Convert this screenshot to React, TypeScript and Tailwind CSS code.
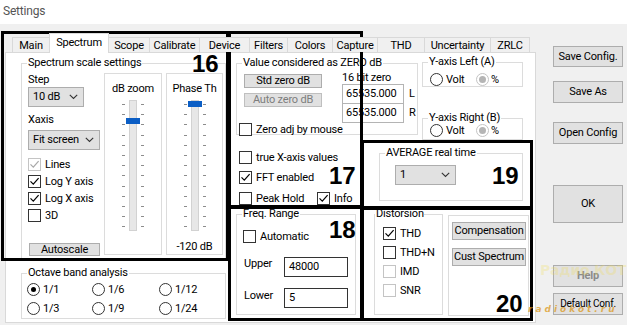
import React from "react";

const tabs: [string, string][] = [
  ["Main", "w-[38px]"],
  ["Spectrum", "w-[60px]"],
  ["Scope", "w-[42px]"],
  ["Calibrate", "w-[51px]"],
  ["Device", "w-[51px]"],
  ["Filters", "w-[39px]"],
  ["Colors", "w-[46px]"],
  ["Capture", "w-[46px]"],
  ["THD", "w-[48px]"],
  ["Uncertainty", "w-[67px]"],
  ["ZRLC", "w-[40px]"],
];

function Check({ on = false, off = false }: { on?: boolean; off?: boolean }) {
  return (
    <span
      className={`flex h-[13px] w-[13px] shrink-0 items-center justify-center border bg-white ${
        off ? "border-[#c4c4c4]" : "border-[#333333]"
      }`}
    >
      {on && (
        <svg width="11" height="11" viewBox="0 0 11 11">
          <path d="M1.5 5.3l2.8 2.9 5.3-6.1" fill="none" stroke={off ? "#a8a8a8" : "#000"} strokeWidth="1.2" />
        </svg>
      )}
    </span>
  );
}

function CheckRow({ label, on, off, className = "" }: { label: string; on?: boolean; off?: boolean; className?: string }) {
  return (
    <div className={`flex items-center gap-[4px] ${className}`}>
      <Check on={on} off={off} />
      <span>{label}</span>
    </div>
  );
}

function Radio({ on = false, off = false }: { on?: boolean; off?: boolean }) {
  return (
    <span
      className={`flex h-[13px] w-[13px] shrink-0 items-center justify-center rounded-full border bg-white ${
        off ? "border-[#c4c4c4]" : "border-[#333333]"
      }`}
    >
      {on && <span className={`rounded-full ${off ? "h-[7px] w-[7px] bg-[#b5b5b5]" : "h-[5px] w-[5px] bg-black"}`} />}
    </span>
  );
}

function Btn({ children, className = "" }: { children: React.ReactNode; className?: string }) {
  return (
    <div className={`flex items-center justify-center whitespace-nowrap border border-[#adadad] bg-[#e1e1e1] ${className}`}>
      {children}
    </div>
  );
}

function Combo({ text, className = "" }: { text: string; className?: string }) {
  return (
    <div className={`flex h-[20px] items-center justify-between border border-[#adadad] bg-[#e1e1e1] pl-[4px] pr-[5px] ${className}`}>
      <span>{text}</span>
      <svg width="9" height="6" viewBox="0 0 9 6">
        <path d="M0.8 0.8L4.5 4.5L8.2 0.8" fill="none" stroke="#333" strokeWidth="1.1" />
      </svg>
    </div>
  );
}

function Slider({ thumb }: { thumb: number }) {
  const ticks = Array.from({ length: 13 }, (_, i) => Math.round(4 + i * 10.2) + 0.5);
  return (
    <svg width="24" height="131" viewBox="0 0 24 131">
      <rect x="8.5" y="0.5" width="7" height="130" fill="#e7e7e7" stroke="#d2d2d2" />
      {ticks.map((y) => (
        <g key={y}>
          <line x1="1" x2="4" y1={y} y2={y} stroke="#8c8c8c" />
          <line x1="20" x2="23" y1={y} y2={y} stroke="#8c8c8c" />
        </g>
      ))}
      <rect x="5" y={thumb} width="14" height="6" fill="#0b5ec5" />
    </svg>
  );
}

function Mark({ n, box, num }: { n: string; box: string; num: string }) {
  return (
    <div className={`absolute border-[3px] border-black ${box}`}>
      <span className={`absolute font-['Liberation_Sans',sans-serif] text-[24px] font-bold leading-[24px] ${num}`}>{n}</span>
    </div>
  );
}

export default function App() {
  return (
    <div className="relative h-[325px] w-[627px] overflow-hidden bg-[#f0f0f0] font-['Roboto',sans-serif] text-[11px] leading-[12px] tracking-[-0.2px] text-black">
      <div className="h-[24px] bg-white pl-[3px] pt-[4px] text-[12px] leading-[14px] text-[#555555]">Settings</div>

      <div className="flex">
        {/* tab control */}
        <div className="ml-[5px] w-[531px] pt-[9px]">
          <div className="relative z-10 -mb-px flex h-[20px] items-end pl-[7px]">
            {tabs.map(([t, w], i) =>
              t === "Spectrum" ? (
                <div key={t} className={`relative z-10 -ml-px flex h-[20px] justify-center border border-b-0 border-[#d9d9d9] bg-white pt-[3px] ${w}`}>
                  {t}
                </div>
              ) : (
                <div
                  key={t}
                  className={`mb-px flex h-[15px] justify-center border border-b-0 border-[#d9d9d9] bg-[#f0f0f0] pt-[2px] ${w} ${i === 0 ? "" : "-ml-px"}`}
                >
                  {t}
                </div>
              )
            )}
          </div>

          <div className="flex h-[271px] border border-[#d9d9d9] bg-white">
            {/* left column */}
            <div className="ml-[15px] flex w-[205px] flex-col">
              <fieldset className="mt-[4px] h-[203px] border border-[#dcdcdc]">
                <legend className="ml-[5px] px-[1px] leading-[12px]">Spectrum scale settings</legend>
                <div className="flex">
                  <div className="ml-[6px] flex w-[72px] flex-col">
                    <div className="mt-[5px]">Step</div>
                    <Combo text="10 dB" className="mt-[1px] w-[56px]" />
                    <div className="mt-[7px]">Xaxis</div>
                    <Combo text="Fit screen" className="mt-[4px] w-[72px]" />
                    <div className="mt-[8px] flex flex-col gap-[4px]">
                      <CheckRow label="Lines" on off />
                      <CheckRow label="Log Y axis" on />
                      <CheckRow label="Log X axis" on />
                      <CheckRow label="3D" />
                    </div>
                    <Btn className="ml-[1px] mt-[21px] h-[13px] w-[71px]">Autoscale</Btn>
                  </div>
                  <div className="ml-[4px] mt-[4px] flex h-[182px] w-[58px] flex-col items-center border border-[#dcdcdc]">
                    <div className="mt-[9px]">dB zoom</div>
                    <div className="mt-[5px]">
                      <Slider thumb={18} />
                    </div>
                  </div>
                  <div className="ml-[4px] mt-[4px] flex h-[182px] w-[57px] flex-col items-center border border-[#dcdcdc]">
                    <div className="mt-[9px]">Phase Th</div>
                    <div className="mt-[5px]">
                      <Slider thumb={1} />
                    </div>
                    <div className="mt-[10px]">-120 dB</div>
                  </div>
                </div>
              </fieldset>

              <fieldset className="mt-[7px] h-[52px] border border-[#dcdcdc]">
                <legend className="ml-[5px] px-[1px] leading-[12px]">Octave band analysis</legend>
                <div className="mt-[4px] grid grid-cols-[65px_67px_60px] gap-y-[6px] pl-[5px]">
                  {[
                    ["1/1", true],
                    ["1/6", false],
                    ["1/12", false],
                    ["1/3", false],
                    ["1/9", false],
                    ["1/24", false],
                  ].map(([l, on]) => (
                    <div key={l as string} className="flex items-center gap-[3px]">
                      <Radio on={on as boolean} />
                      <span>{l}</span>
                    </div>
                  ))}
                </div>
              </fieldset>
            </div>

            {/* right area */}
            <div className="ml-[10px] flex w-[293px] flex-col">
              <div className="flex items-start">
                <fieldset className="mt-[4px] h-[78px] w-[182px] border border-[#dcdcdc]">
                  <legend className="ml-[5px] px-[1px] leading-[12px]">Value considered as ZERO dB</legend>
                  <div className="flex">
                    <div className="ml-[7px] flex flex-col">
                      <Btn className="mt-[5px] h-[14px] w-[78px]">Std zero dB</Btn>
                      <Btn className="mt-[5px] h-[14px] w-[78px] border-[#bfbfbf] bg-[#cccccc] text-[#7d7d7d]">Auto zero dB</Btn>
                    </div>
                    <div className="ml-[20px] flex flex-col">
                      <div className="mt-[3px]">16 bit zero</div>
                      {["L", "R"].map((s, i) => (
                        <div key={s} className={`flex items-center ${i ? "-mt-px" : ""}`}>
                          <div className="flex h-[20px] w-[62px] items-center border border-[#b4b4b4] bg-white pl-[3px]">65535.000</div>
                          <span className="ml-[5px]">{s}</span>
                        </div>
                      ))}
                    </div>
                  </div>
                  <CheckRow label="Zero adj by mouse" className="ml-[2px]" />
                </fieldset>

                <div className="ml-[4px] flex w-[101px] flex-col">
                  <fieldset className="mt-[3px] h-[31px] border border-[#dcdcdc]">
                    <legend className="ml-[5px] px-[1px] leading-[12px]">Y-axis Left (A)</legend>
                    <div className="mt-[5px] flex items-center pl-[7px]">
                      <Radio />
                      <span className="ml-[3px] w-[30px]">Volt</span>
                      <Radio on off />
                      <span className="ml-[2px]">%</span>
                    </div>
                  </fieldset>
                  <fieldset className="mt-[25px] h-[28px] border border-[#dcdcdc]">
                    <legend className="ml-[5px] px-[1px] leading-[12px]">Y-axis Right (B)</legend>
                    <div className="flex items-center pl-[7px]">
                      <Radio />
                      <span className="ml-[3px] w-[30px]">Volt</span>
                      <Radio on off />
                      <span className="ml-[2px]">%</span>
                    </div>
                  </fieldset>
                </div>
              </div>

              <div className="flex items-start">
                <div className="flex w-[143px] flex-col pl-[3px]">
                  <CheckRow label="true X-axis values" className="mt-[11px]" />
                  <CheckRow label="FFT enabled" on className="mt-[7px]" />
                  <div className="mt-[8px] flex">
                    <CheckRow label="Peak Hold" className="w-[78px]" />
                    <CheckRow label="Info" on />
                  </div>
                </div>
                <fieldset className="mt-[7px] h-[54px] w-[144px] border border-[#dcdcdc]">
                  <legend className="ml-[5px] px-[1px] leading-[12px]">AVERAGE real time</legend>
                  <Combo text="1" className="ml-[15px] mt-[6px] w-[61px]" />
                </fieldset>
              </div>

              <div className="flex items-start">
                <fieldset className="mt-[3px] h-[107px] w-[120px] border border-[#dcdcdc]">
                  <legend className="ml-[5px] px-[1px] leading-[12px]">Freq. Range</legend>
                  <CheckRow label="Automatic" className="ml-[6px] mt-[10px]" />
                  <div className="ml-[7px] mt-[14px] flex items-start">
                    <span className="w-[40px] pt-[1px]">Upper</span>
                    <div className="flex h-[20px] w-[64px] items-center border border-[#333333] bg-white pl-[4px]">48000</div>
                  </div>
                  <div className="ml-[7px] mt-[11px] flex items-start">
                    <span className="w-[40px] pt-[2px]">Lower</span>
                    <div className="flex h-[20px] w-[64px] items-center border border-[#333333] bg-white pl-[4px]">5</div>
                  </div>
                </fieldset>

                <fieldset className="ml-[18px] mt-[3px] h-[107px] w-[69px] border border-[#dcdcdc]">
                  <legend className="pl-[1px] leading-[12px]">Distorsion</legend>
                  <div className="ml-[8px] mt-[7px] flex flex-col gap-[6px]">
                    <CheckRow label="THD" on />
                    <CheckRow label="THD+N" />
                    <CheckRow label="IMD" off />
                    <CheckRow label="SNR" off />
                  </div>
                </fieldset>

                <div className="ml-[5px] mt-[10px] flex h-[101px] w-[81px] flex-col border border-[#dcdcdc]">
                  <Btn className="ml-[3px] mt-[6px] h-[18px] w-[74px]">Compensation</Btn>
                  <Btn className="ml-[3px] mt-[8px] h-[18px] w-[74px]">Cust Spectrum</Btn>
                </div>
              </div>
            </div>
          </div>
        </div>

        {/* dialog buttons */}
        <div className="ml-[17px] flex w-[70px] flex-col">
          <Btn className="mt-[22px] h-[21px]">Save Config.</Btn>
          <Btn className="mt-[14px] h-[22px]">Save As</Btn>
          <Btn className="mt-[19px] h-[22px]">Open Config</Btn>
          <Btn className="mt-[41px] h-[38px]">OK</Btn>
          <Btn className="mt-[42px] h-[22px] font-bold text-[#8a8a8a]">Help</Btn>
          <Btn className="mt-[6px] h-[22px] text-[10px]">Default Conf.</Btn>
        </div>
      </div>

      {/* annotation frames */}
      <Mark n="16" box="left-[1px] top-[31px] h-[230px] w-[228px]" num="left-[188px] top-[18px]" />
      <Mark n="17" box="left-[228px] top-[31px] h-[177px] w-[135px]" num="left-[98px] top-[130px]" />
      <Mark n="18" box="left-[228px] top-[206px] h-[115px] w-[135px]" num="left-[98px] top-[9px]" />
      <Mark n="19" box="left-[361px] top-[140px] h-[69px] w-[172px]" num="left-[128px] top-[21px]" />
      <Mark n="20" box="left-[361px] top-[207px] h-[114px] w-[172px]" num="left-[132px] top-[82px]" />

      {/* watermark */}
      <div className="pointer-events-none absolute left-[540px] top-[262px] whitespace-nowrap font-['DejaVu_Sans',sans-serif] text-[14px] font-bold leading-[16px] text-[#f2dc4a]/25">
        Радио КОТ
      </div>
      <div className="pointer-events-none absolute left-[528px] top-[304px] whitespace-nowrap font-['DejaVu_Sans',sans-serif] text-[9px] font-bold italic leading-[10px] tracking-[3px] text-[#dc9a1e]/75">
        radiokot.ru
      </div>
    </div>
  );
}
